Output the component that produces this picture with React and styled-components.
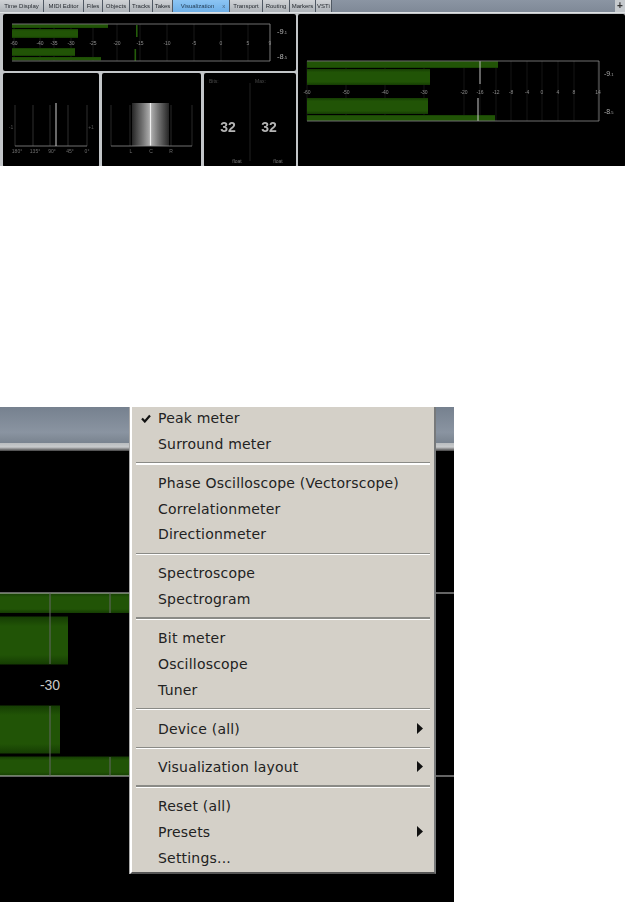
import React from 'react';
import styled, { createGlobalStyle } from 'styled-components';

const Global = createGlobalStyle`
  html, body { margin: 0; padding: 0; background: #fff; }
  body { font-family: "Liberation Sans", Arial, sans-serif; }
`;
const Page = styled.div`width: 625px; height: 902px; overflow: hidden; background: #fff;`;
const TopShot = styled.section`
  width: 625px; height: 166px; margin-bottom: 241px; background: #c3c6c9; overflow: hidden; filter: blur(0.4px);
`;
const TabBar = styled.div`
  height: 12px; display: flex; background: linear-gradient(#8b95a3, #7f8997); border-bottom: 1px solid #dfe2e4;
`;
const Tab = styled.div`
  width: ${p => p.$w}px; box-sizing: border-box; height: 12px; display: flex; align-items: center; justify-content: center; gap: 8px;
  padding-left: ${p => p.$active ? '4px' : '0'};
  font-size: 6px; color: ${p => p.$active ? '#1f3850' : '#24282e'};
  background: ${p => p.$active ? 'linear-gradient(#8cc5f4, #6fb0e8)' : 'linear-gradient(#d0d3d6, #aeb3b8)'};
  border-right: 1px solid #4f5863; white-space: nowrap;
`;
const TabClose = styled.span`font-size: 6px; color: #45617c;`;
const PlusButton = styled.div`
  margin-left: auto; width: 10px; height: 12px; display: flex; align-items: center; justify-content: center;
  background: #c5c9cd; color: #333; font-size: 10px; font-weight: bold; line-height: 1;
`;
const Workspace = styled.div`
  display: grid; grid-template-columns: 293px 327px; gap: 2px; padding: 1px 0 0 3px; height: 153px;
`;
const LeftColumn = styled.div`display: flex; flex-direction: column; gap: 2px;`;
const Panel = styled.div`
  background: #000; border-radius: 2px; overflow: hidden; width: ${p => p.$w ? `${p.$w}px` : 'auto'}; height: ${p => p.$h ? `${p.$h}px` : 'auto'};
`;
const PanelRow = styled.div`display: flex; gap: 3px;`;
const Drawing = styled.svg`display: block; width: 100%; height: 100%;`;
const Label = styled.text`
  font-family: "Liberation Sans", Arial, sans-serif; fill: ${p => p.$c || '#8c8c8c'}; font-size: ${p => p.$s || 5}px; text-anchor: ${p => p.$a || 'middle'};
`;

const LowerShot = styled.section`
  position: relative; width: 454px; height: 495px; overflow: hidden; background: #000; display: flex; flex-direction: column;
`;
const LowerBar = styled.div`height: 36px; flex: none; background: linear-gradient(#76818f, #8a94a1 70%, #79838f);`;
const LowerStrip = styled.div`height: 8px; flex: none; background: linear-gradient(#b9bcbf, #c8cacc 50%, #444);`;
const LowerCanvas = styled.div`flex: 1; background: #000;`;
const Menu = styled.nav`
  position: absolute; left: 130px; top: -2px; width: 306px; height: 469px; box-sizing: border-box; padding-bottom: 3px;
  background: #d4d0c8; border-left: 2px solid #fff; border-right: 2px solid #77797a; border-bottom: 2px solid #555;
  box-shadow: -1px 0 0 #a9a9a9;
  font-family: "DejaVu Sans", Verdana, sans-serif; font-size: 14px; letter-spacing: .2px; color: #222;
`;
const Item = styled.div`
  position: relative; height: 25.93px; display: flex; align-items: center; padding-left: 26px; white-space: nowrap;
`;
const Sep = styled.div`
  height: 12.85px; display: flex; flex-direction: column; justify-content: center; padding: 0 4px 0 4px;
  &::before { content: ''; display: block; height: 1.3px; background: #8a8a86; }
  &::after { content: ''; display: block; height: 1.3px; background: #fff; }
`;
const Check = styled.svg`position: absolute; left: 9px; top: 9px; width: 10px; height: 9px;`;
const Arrow = styled.svg`position: absolute; right: 10px; top: 7px; width: 7px; height: 11px;`;

const tabs = [['Time Display',44],['MIDI Editor',40],['Files',19],['Objects',27],['Tracks',23],['Takes',20],['Visualization',57,true],['Transport',33],['Routing',27],['Markers',26],['VSTi',16]];

const Meter = ({ x0, x1, top, h, rows, ticks, markers, labelY, tickColor = '#666', s = 5 }) => (
  <>
    {ticks.map(([x]) => <line key={x} x1={x} x2={x} y1={top} y2={top + h} stroke={tickColor} strokeWidth=".5" opacity=".5" />)}
    {rows.map(([y, hh, w], i) => <rect key={i} x={x0} y={y} width={w - x0} height={hh} fill="url(#bar)" />)}
    {markers}
    <path d={`M${x0} ${top}H${x1}V${top + h}H${x0}`} fill="none" stroke="#8a8a8a" strokeWidth=".8" />
    {ticks.map(([x, t]) => <Label key={`l${x}`} x={x} y={labelY} $s={s}>{t}</Label>)}
  </>
);

const BarGradient = () => (
  <defs>
    <linearGradient id="bar" x1="0" y1="0" x2="0" y2="1">
      <stop offset="0" stopColor="#153c03"/><stop offset=".2" stopColor="#215406"/><stop offset=".8" stopColor="#215406"/><stop offset="1" stopColor="#153c03"/>
    </linearGradient>
  </defs>
);

export default function App() {
  return (
    <Page>
      <Global />
      <TopShot>
        <TabBar>
          {tabs.map(([t, w, a]) => <Tab key={t} $w={w} $active={a}>{t}{a && <TabClose>x</TabClose>}</Tab>)}
          <PlusButton>+</PlusButton>
        </TabBar>
        <Workspace>
          <LeftColumn>
            <Panel $h={57}>
              <Drawing viewBox="0 0 293 57">
                <BarGradient />
                <Meter x0={9} x1={267} top={10} h={37} labelY={31}
                  rows={[[10,4,105],[15,9,75],[34,8,72],[43,3.5,98]]}
                  ticks={[[11,'-60'],[37,'-40'],[51,'-35'],[68,'-30'],[90,'-25'],[114,'-20'],[137,'-15'],[164,'-10'],[191,'-5'],[218,'0'],[245,'5'],[267,'9']]}
                  markers={<><rect x="133" y="11" width="1.6" height="12" fill="#245c0a"/><rect x="131.5" y="35" width="1.6" height="12" fill="#245c0a"/></>}
                />
                <Label x={274} y={20} $s={7.5} $a="start" $c="#b5b5b5">-9<tspan fontSize="4">.1</tspan></Label>
                <Label x={274} y={45} $s={7.5} $a="start" $c="#b5b5b5">-8<tspan fontSize="4">.5</tspan></Label>
              </Drawing>
            </Panel>
            <PanelRow>
              <Panel $w={96} $h={94}>
                <Drawing viewBox="0 0 96 94">
                  {[12,30,47,65,84].map(x => <line key={x} x1={x} x2={x} y1={32} y2={73} stroke="#4e4e4e" strokeWidth=".6"/>)}
                  <line x1="12" x2="84" y1="73" y2="73" stroke="#8e8e8e" strokeWidth=".8"/>
                  <line x1="53" x2="53" y1="30" y2="73" stroke="#d0d0d0" strokeWidth="1"/>
                  <Label x={8} y={56} $c="#555">-1</Label>
                  <Label x={88} y={56} $c="#555">+1</Label>
                  {[[14,'180°'],[32,'135°'],[49,'90°'],[67,'45°'],[84,'0°']].map(([x,t]) => <Label key={t} x={x} y={80} $c="#6e6e6e">{t}</Label>)}
                </Drawing>
              </Panel>
              <Panel $w={99} $h={94}>
                <Drawing viewBox="0 0 99 94">
                  <defs>
                    <linearGradient id="dir">
                      <stop offset="0" stopColor="#252525"/><stop offset=".3" stopColor="#777"/><stop offset=".47" stopColor="#aaa"/><stop offset=".5" stopColor="#eee"/><stop offset=".53" stopColor="#aaa"/><stop offset=".7" stopColor="#777"/><stop offset="1" stopColor="#252525"/>
                    </linearGradient>
                  </defs>
                  {[9,28,69,90].map(x => <line key={x} x1={x} x2={x} y1={32} y2={73} stroke="#444" strokeWidth=".6"/>)}
                  <rect x="30" y="30" width="37" height="43" fill="url(#dir)"/>
                  <line x1="9" x2="90" y1="73" y2="73" stroke="#8e8e8e" strokeWidth=".8"/>
                  {[[29,'L'],[49,'C'],[69,'R']].map(([x,t]) => <Label key={t} x={x} y={80} $c="#6e6e6e">{t}</Label>)}
                </Drawing>
              </Panel>
              <Panel $w={92} $h={94}>
                <Drawing viewBox="0 0 92 94">
                  <line x1="46" x2="46" y1="10" y2="88" stroke="#2a2a2a" strokeWidth=".8"/>
                  <Label x={5} y={10} $a="start" $c="#4a4a4a">Bits:</Label>
                  <Label x={51} y={10} $a="start" $c="#4a4a4a">Max:</Label>
                  <Label x={24} y={59} $s={14} $c="#b4b4b4" fontWeight="bold">32</Label>
                  <Label x={65} y={59} $s={14} $c="#b4b4b4" fontWeight="bold">32</Label>
                  <Label x={33} y={90} $c="#777">float</Label>
                  <Label x={74} y={90} $c="#777">float</Label>
                </Drawing>
              </Panel>
            </PanelRow>
          </LeftColumn>
          <Panel $h={153}>
            <Drawing viewBox="0 0 327 153">
              <BarGradient />
              <Meter x0={9} x1={301} top={47} h={60} labelY={80} tickColor="#555"
                rows={[[47,7,200],[55,16,132],[84,16,130],[101,6,197]]}
                ticks={[[9,'-60'],[48,'-50'],[87,'-40'],[126,'-30'],[166,'-20'],[182,'-16'],[198,'-12'],[213,'-8'],[229,'-4'],[244,'0'],[260,'4'],[276,'8'],[300,'14']]}
                markers={<><rect x="181.5" y="47" width="1" height="23" fill="#b9b9b9"/><rect x="179.5" y="84" width="1" height="23" fill="#c9c9c9"/></>}
              />
              <Label x={306} y={62} $s={7} $a="start" $c="#aaa">-9<tspan fontSize="4">.1</tspan></Label>
              <Label x={306} y={100} $s={7} $a="start" $c="#aaa">-8<tspan fontSize="4">.5</tspan></Label>
            </Drawing>
          </Panel>
        </Workspace>
      </TopShot>
      <LowerShot>
        <LowerBar />
        <LowerStrip />
        <LowerCanvas>
          <Drawing viewBox="0 0 454 451">
            <BarGradient />
            <rect x="0" y="142" width="454" height="20" fill="url(#bar)"/>
            <rect x="0" y="165.5" width="68" height="48" fill="url(#bar)"/>
            <rect x="0" y="254.5" width="60" height="48" fill="url(#bar)"/>
            <rect x="0" y="305.5" width="454" height="19.5" fill="url(#bar)"/>
            <rect x="436" y="142" width="18" height="183" fill="#000"/>
            <path d="M0 142H454M0 325H454" stroke="#c8c8c8" strokeWidth="1"/>
            <path d="M50 142V213M50 255V325M110 142V162M110 306V325" stroke="#666" strokeWidth="1"/>
            <Label x={50} y={239} $s={14} $c="#c8c8c8">-30</Label>
          </Drawing>
        </LowerCanvas>
        <Menu>
          <Item>Peak meter<Check viewBox="0 0 10 9"><path d="M1 4.5 L3.8 7.5 L9 1.5" fill="none" stroke="#111" strokeWidth="2.2"/></Check></Item>
          <Item>Surround meter</Item>
          <Sep />
          <Item>Phase Oscilloscope (Vectorscope)</Item>
          <Item>Correlationmeter</Item>
          <Item>Directionmeter</Item>
          <Sep />
          <Item>Spectroscope</Item>
          <Item>Spectrogram</Item>
          <Sep />
          <Item>Bit meter</Item>
          <Item>Oscilloscope</Item>
          <Item>Tuner</Item>
          <Sep />
          <Item>Device (all)<Arrow viewBox="0 0 7 11"><path d="M0 0L6 5.5L0 11Z" fill="#111"/></Arrow></Item>
          <Sep />
          <Item>Visualization layout<Arrow viewBox="0 0 7 11"><path d="M0 0L6 5.5L0 11Z" fill="#111"/></Arrow></Item>
          <Sep />
          <Item>Reset (all)</Item>
          <Item>Presets<Arrow viewBox="0 0 7 11"><path d="M0 0L6 5.5L0 11Z" fill="#111"/></Arrow></Item>
          <Item>Settings...</Item>
        </Menu>
      </LowerShot>
    </Page>
  );
}
